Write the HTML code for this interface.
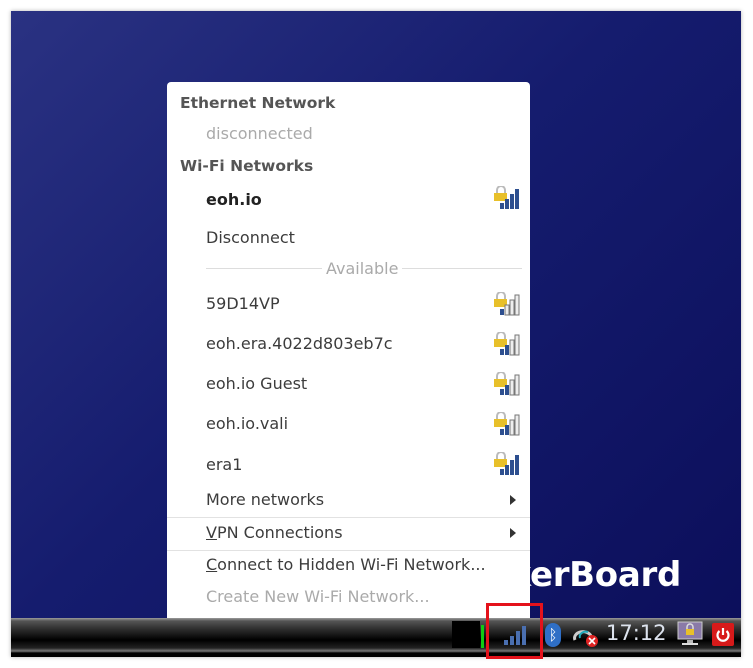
<!DOCTYPE html>
<html><head><meta charset="utf-8"><style>
*{margin:0;padding:0;box-sizing:border-box}
body{width:753px;height:668px;background:#fff;position:relative;overflow:hidden;font-family:"DejaVu Sans","Liberation Sans",sans-serif}
#scr{position:absolute;left:11px;top:11px;width:730px;height:646px;background:linear-gradient(135deg,#2a3282 0%,#151c6e 45%,#0b0e5a 100%);box-shadow:0 0 4px rgba(0,0,0,.3)}
#brand{position:absolute;right:72px;top:555px;color:#fff;font:bold 34px "DejaVu Sans",sans-serif;letter-spacing:-0.3px;white-space:nowrap}
#bar{position:absolute;left:11px;top:618px;width:730px;height:39px;background:linear-gradient(#9a9a9a 0,#555 3px,#333 10px,#111 18px,#000 22px,#222 30px,#777 33px,#000 35px)}
#menu{position:absolute;left:167px;top:82px;width:363px;height:536px;background:#fff;border-radius:4px 4px 0 0;font-size:16px;color:#3c3c3c}
.t{position:absolute;white-space:nowrap}
.h{font-weight:bold;color:#555;font-size:15.5px}
.g{color:#aaa}
.sep{position:absolute;left:0;right:0;height:1px;background:#e2e2e2}
.ic{position:absolute;left:326px;width:28px;height:24px}
.arr{position:absolute;left:343px;width:0;height:0;border-left:6px solid #333;border-top:5px solid transparent;border-bottom:5px solid transparent}
</style></head><body>
<div id="scr"></div>
<div id="brand">TinkerBoard</div>
<div id="menu">
<div class="t h" style="left:13px;top:12px">Ethernet Network</div>
<div class="t g" style="left:39px;top:42px">disconnected</div>
<div class="t h" style="left:13px;top:75px">Wi-Fi Networks</div>
<div class="t" style="left:39px;top:108px;font-weight:bold;color:#222">eoh.io</div>
<svg class="ic" style="top:104px" viewBox="0 0 28 24"><path d="M4 7V4a4 4 0 0 1 8 0v3" fill="none" stroke="#bbb" stroke-width="2"/><rect x="1" y="7" width="13" height="8" fill="#e8c02a"/><rect x="7" y="17" width="4" height="6" fill="#2d4f8f"/><rect x="12" y="13" width="4" height="10" fill="#2d4f8f"/><rect x="17" y="8" width="4" height="15" fill="#2d4f8f"/><rect x="22" y="3" width="4" height="20" fill="#2d4f8f"/></svg>
<div class="t" style="left:39px;top:146px">Disconnect</div>
<div class="sep" style="left:39px;right:8px;top:186px;background:#ddd"></div>
<div class="t g" style="left:155px;top:177px;background:#fff;padding:0 4px">Available</div>
<div class="t" style="left:39px;top:212px">59D14VP</div>
<div class="t" style="left:39px;top:252px">eoh.era.4022d803eb7c</div>
<div class="t" style="left:39px;top:292px">eoh.io Guest</div>
<div class="t" style="left:39px;top:332px">eoh.io.vali</div>
<div class="t" style="left:39px;top:373px">era1</div>
<svg class="ic" style="top:210px" viewBox="0 0 28 24"><path d="M4 7V4a4 4 0 0 1 8 0v3" fill="none" stroke="#bbb" stroke-width="2"/><rect x="1" y="7" width="13" height="8" fill="#e8c02a"/><rect x="7" y="17" width="4" height="6" fill="#2d4f8f"/><rect x="12" y="13" width="4" height="10" fill="#eee" stroke="#777"/><rect x="17" y="8" width="4" height="15" fill="#eee" stroke="#777"/><rect x="22" y="3" width="4" height="20" fill="#eee" stroke="#777"/></svg>
<svg class="ic" style="top:250px" viewBox="0 0 28 24"><path d="M4 7V4a4 4 0 0 1 8 0v3" fill="none" stroke="#bbb" stroke-width="2"/><rect x="1" y="7" width="13" height="8" fill="#e8c02a"/><rect x="7" y="17" width="4" height="6" fill="#2d4f8f"/><rect x="12" y="13" width="4" height="10" fill="#2d4f8f"/><rect x="17" y="8" width="4" height="15" fill="#eee" stroke="#777"/><rect x="22" y="3" width="4" height="20" fill="#eee" stroke="#777"/></svg>
<svg class="ic" style="top:290px" viewBox="0 0 28 24"><path d="M4 7V4a4 4 0 0 1 8 0v3" fill="none" stroke="#bbb" stroke-width="2"/><rect x="1" y="7" width="13" height="8" fill="#e8c02a"/><rect x="7" y="17" width="4" height="6" fill="#2d4f8f"/><rect x="12" y="13" width="4" height="10" fill="#2d4f8f"/><rect x="17" y="8" width="4" height="15" fill="#eee" stroke="#777"/><rect x="22" y="3" width="4" height="20" fill="#eee" stroke="#777"/></svg>
<svg class="ic" style="top:330px" viewBox="0 0 28 24"><path d="M4 7V4a4 4 0 0 1 8 0v3" fill="none" stroke="#bbb" stroke-width="2"/><rect x="1" y="7" width="13" height="8" fill="#e8c02a"/><rect x="7" y="17" width="4" height="6" fill="#2d4f8f"/><rect x="12" y="13" width="4" height="10" fill="#2d4f8f"/><rect x="17" y="8" width="4" height="15" fill="#eee" stroke="#777"/><rect x="22" y="3" width="4" height="20" fill="#eee" stroke="#777"/></svg>
<svg class="ic" style="top:370px" viewBox="0 0 28 24"><path d="M4 7V4a4 4 0 0 1 8 0v3" fill="none" stroke="#bbb" stroke-width="2"/><rect x="1" y="7" width="13" height="8" fill="#e8c02a"/><rect x="7" y="17" width="4" height="6" fill="#2d4f8f"/><rect x="12" y="13" width="4" height="10" fill="#2d4f8f"/><rect x="17" y="8" width="4" height="15" fill="#2d4f8f"/><rect x="22" y="3" width="4" height="20" fill="#2d4f8f"/></svg>
<div class="t" style="left:39px;top:408px">More networks</div>
<div class="arr" style="top:413px"></div>
<div class="sep" style="top:435px"></div>
<div class="t" style="left:39px;top:441px"><u>V</u>PN Connections</div>
<div class="arr" style="top:446px"></div>
<div class="sep" style="top:468px"></div>
<div class="t" style="left:39px;top:473px"><u>C</u>onnect to Hidden Wi-Fi Network...</div>
<div class="t g" style="left:39px;top:505px">Create New Wi-Fi Network...</div>
</div>
<div id="bar"></div>
<div style="position:absolute;left:452px;top:621px;width:28px;height:27px;background:#000"></div>
<div style="position:absolute;left:481px;top:625px;width:3px;height:23px;background:#1c1"></div>
<svg style="position:absolute;left:503px;top:624px" width="24" height="22" viewBox="0 0 24 22"><rect x="1" y="16" width="4" height="5" fill="#4a6fb0"/><rect x="7" y="12" width="4" height="9" fill="#4a6fb0"/><rect x="13" y="7" width="4" height="14" fill="#4a6fb0"/><rect x="19" y="2" width="4" height="19" fill="#4a6fb0"/></svg>
<div style="position:absolute;left:486px;top:603px;width:57px;height:56px;border:3px solid #e4121b"></div>
<div style="position:absolute;left:545px;top:623px;width:16px;height:24px;border-radius:8px;background:#2f6fc6;color:#fff;font-size:15px;text-align:center;line-height:24px">ᛒ</div>
<svg style="position:absolute;left:572px;top:624px" width="28" height="24" viewBox="0 0 28 24"><path d="M3 16a8 6 0 0 1 16-4" stroke="#ccc" stroke-width="3" fill="none"/><path d="M8 14a6 5 0 0 1 8-6" stroke="#2ab" stroke-width="2" fill="none"/><circle cx="20" cy="17" r="6" fill="#d22"/><path d="M17 14l6 6M23 14l-6 6" stroke="#fff" stroke-width="1.6"/></svg>
<div style="position:absolute;left:606px;top:621px;color:#dde3ee;font-size:21px">17:12</div>
<svg style="position:absolute;left:676px;top:621px" width="28" height="26" viewBox="0 0 28 26"><rect x="2" y="1" width="24" height="17" fill="#8a7aa8" stroke="#ccc"/><rect x="10" y="8" width="8" height="6" fill="#e8c02a"/><path d="M11 8V6a3 3 0 0 1 6 0v2" stroke="#ddd" fill="none" stroke-width="1.5"/><rect x="11" y="19" width="6" height="3" fill="#bbb"/><rect x="6" y="22" width="16" height="2" fill="#ddd"/></svg>
<div style="position:absolute;left:712px;top:623px;width:22px;height:23px;background:#d71a1a;border-radius:2px"></div>
<svg style="position:absolute;left:715px;top:626px" width="16" height="17" viewBox="0 0 16 17"><path d="M4.5 5a5.5 5.5 0 1 0 7 0" stroke="#fff" stroke-width="2.2" fill="none"/><path d="M8 2v7" stroke="#fff" stroke-width="2.2"/></svg>
</body></html>
